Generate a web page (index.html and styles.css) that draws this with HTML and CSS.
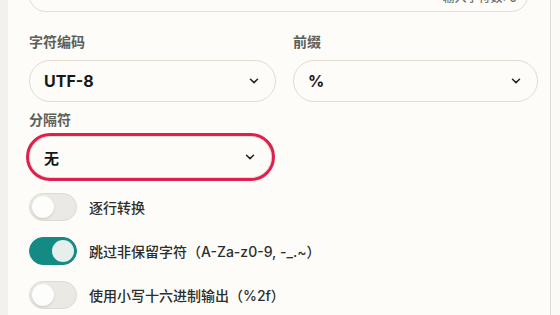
FILE: index.html
```html
<!DOCTYPE html>
<html lang="zh">
<head>
<meta charset="utf-8">
<link rel="stylesheet" href="styles.css">
</head>
<body>
<div class="page">
  <div class="strip"></div>
  <div class="panel">
    <div class="textarea"><span class="count">输入字符数: 0</span></div>
    <div class="grid">
      <div class="field">
        <div class="label">字符编码</div>
        <div class="select"><span class="val">UTF-8</span><svg class="chev" width="10" height="6" viewBox="0 0 10 6"><path d="M1.5 1.2 L5 4.6 L8.5 1.2" fill="none" stroke="#222" stroke-width="1.5" stroke-linecap="round" stroke-linejoin="round"/></svg></div>
      </div>
      <div class="field">
        <div class="label">前缀</div>
        <div class="select"><span class="val">%</span><svg class="chev" width="10" height="6" viewBox="0 0 10 6"><path d="M1.5 1.2 L5 4.6 L8.5 1.2" fill="none" stroke="#222" stroke-width="1.5" stroke-linecap="round" stroke-linejoin="round"/></svg></div>
      </div>
      <div class="field sep">
        <div class="label">分隔符</div>
        <div class="select focus"><span class="val">无</span><svg class="chev" width="10" height="6" viewBox="0 0 10 6"><path d="M1.5 1.2 L5 4.6 L8.5 1.2" fill="none" stroke="#222" stroke-width="1.5" stroke-linecap="round" stroke-linejoin="round"/></svg></div>
      </div>
    </div>
    <div class="toggles">
      <div class="row"><span class="switch"><span class="knob"></span></span><span class="text">逐行转换</span></div>
      <div class="row"><span class="switch on"><span class="knob"></span></span><span class="text">跳过非保留字符（A-Za-z0-9, -_.~）</span></div>
      <div class="row"><span class="switch"><span class="knob"></span></span><span class="text">使用小写十六进制输出（%2f）</span></div>
    </div>
  </div>
  <div class="rest"></div>
</div>
</body>
</html>
```
FILE: styles.css
```css
* { box-sizing: border-box; }
html, body { margin: 0; padding: 0; }
body {
  width: 560px;
  height: 315px;
  overflow: hidden;
  background: #faf9f5;
  font-family: Inter, "Noto Sans CJK SC", sans-serif;
  color: #1f2321;
}
.page {
  display: flex;
  height: 315px;
}
.strip {
  width: 8px;
  background: #f2f1ec;
  flex: none;
}
.panel {
  width: 543px;
  flex: none;
  background: #fdfcf8;
  border-right: 1px solid #dedbd2;
  padding: 0 12px 0 21px;
}
.rest { flex: 1; background: #fbfaf6; }

.textarea {
  margin-top: -40px;
  width: 499px;
  height: 52px;
  border: 1px solid #e2dfd6;
  border-radius: 16px;
  background: #fdfcf8;
  display: flex;
  align-items: flex-end;
  justify-content: flex-end;
  padding: 0 10px 6px 0;
}
.count {
  font-size: 12px;
  color: #6b706d;
  font-weight: 500;
  line-height: 14px;
}

.grid {
  margin-top: 20px;
  display: grid;
  grid-template-columns: 247px 245px;
  column-gap: 17px;
  row-gap: 8px;
}
.label {
  font-size: 14px;
  line-height: 20px;
  font-weight: 700;
  color: #5a615d;
  margin-bottom: 8px;
}
.sep .label { margin-bottom: 6px; }
.select {
  height: 42px;
  border: 1px solid #e0ddd3;
  border-radius: 21px;
  background: #fdfcf8;
  display: flex;
  align-items: center;
  justify-content: space-between;
  padding: 0 16px 0 14px;
}
.sep .select { width: 243px; }
.select.focus {
  outline: 3px solid #e01f4e;
  outline-offset: 0;
}
.val {
  font-size: 16px;
  font-weight: 700;
  color: #161917;
}
.sep .val { font-size: 15px; }
.chev { display: block; }

.toggles {
  margin-top: 15px;
  display: flex;
  flex-direction: column;
  gap: 16px;
}
.row {
  display: flex;
  align-items: center;
  gap: 12px;
  height: 28px;
}
.switch {
  width: 48px;
  height: 28px;
  border-radius: 14px;
  background: #ebe9e4;
  border: 1px solid #dedbd4;
  display: flex;
  align-items: center;
  padding: 0 2px;
  flex: none;
}
.knob {
  width: 22px;
  height: 22px;
  border-radius: 50%;
  background: #fdfdfb;
  box-shadow: 0 1px 2px rgba(0,0,0,0.15);
}
.switch.on {
  background: #148a85;
  border-color: #148a85;
  justify-content: flex-end;
}
.switch.on .knob { background: #e5efec; box-shadow: none; }
.text {
  font-size: 14px;
  font-weight: 500;
  color: #2a2e2c;
}
```
